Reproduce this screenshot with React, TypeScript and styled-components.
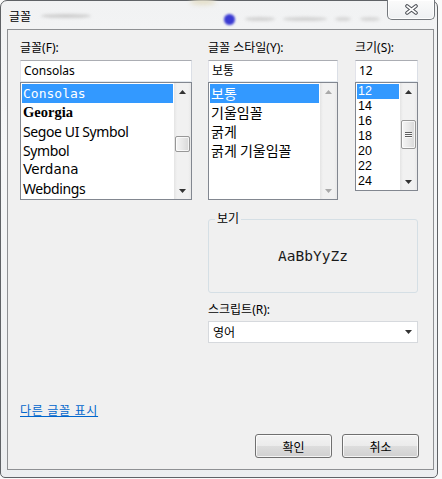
import React from 'react'
import styled, { createGlobalStyle } from 'styled-components'

const GlobalStyle = createGlobalStyle`
  html, body { margin: 0; padding: 0; }
  body {
    background: #fafafa;
    font-family: "Noto Sans", "Noto Sans CJK KR", sans-serif;
    font-size: 12px;
    color: #000;
  }
`

const Desktop = styled.div`
  width: 442px;
  height: 479px;
  overflow: hidden;
  background: #fafafa;
`

const Window = styled.div`
  position: relative;
  width: 438px;
  height: 478px;
  box-sizing: border-box;
  border: 1px solid #5f6266;
  border-radius: 7px 7px 5px 5px;
  background: linear-gradient(to bottom, #f1f2f3 0%, #f6f7f8 30%, #eceef0 100%);
  padding: 0 3px 7px 6px;
  display: flex;
  flex-direction: column;
`

const TitleBar = styled.div`
  position: relative;
  height: 28px;
  flex: none;
  display: flex;
  align-items: center;
  padding-left: 2px;
  font-family: "Noto Sans CJK KR", sans-serif;
  font-size: 12px;
`

const Haze = styled.span<{ $x: number; $y: number; $w: number; $h: number; $c: string; $b: number }>`
  position: absolute;
  left: ${p => p.$x}px;
  top: ${p => p.$y}px;
  width: ${p => p.$w}px;
  height: ${p => p.$h}px;
  background: ${p => p.$c};
  filter: blur(${p => p.$b}px);
  border-radius: 50%;
`

const CloseButton = styled.div`
  position: absolute;
  top: -1px;
  right: 2px;
  width: 48px;
  height: 20px;
  box-sizing: border-box;
  border: 1px solid #74787d;
  border-top: none;
  border-radius: 0 0 5px 5px;
  background: linear-gradient(to bottom, #fbfbfb, #eef0f2);
  box-shadow: inset 0 0 0 1px rgba(255, 255, 255, 0.85);
  display: flex;
  align-items: center;
  justify-content: center;
`

const Client = styled.div`
  height: 441px;
  box-sizing: border-box;
  border: 1px solid #8e9093;
  background: #f0f0f0;
  padding: 10px 14px 11px 12px;
  display: flex;
  flex-direction: column;
`

const FieldRow = styled.div`
  display: flex;
  align-items: flex-start;
`

const Column = styled.div<{ $w: number; $gap?: number }>`
  width: ${p => p.$w}px;
  margin-left: ${p => p.$gap ?? 0}px;
  display: flex;
  flex-direction: column;
`

const Label = styled.div`
  height: 16px;
  line-height: 16px;
  margin-bottom: 4px;
  font-size: 12px;
  white-space: nowrap;
`

const TextBox = styled.div`
  height: 22px;
  box-sizing: border-box;
  border: 1px solid;
  border-color: #abadb3 #dbdfe6 #e3e9ef #e2e3ea;
  background: #fff;
  padding: 0 3px;
  line-height: 20px;
  font-size: 12px;
  white-space: nowrap;
`

const ListBox = styled.div<{ $h: number }>`
  height: ${p => p.$h}px;
  box-sizing: border-box;
  border: 1px solid #828790;
  background: #fff;
  display: flex;
`

const Items = styled.div`
  flex: 1;
  padding: 1px;
  overflow: hidden;
  min-width: 0;
`

const Item = styled.div<{ $h: number; $selected?: boolean }>`
  height: ${p => p.$h}px;
  line-height: ${p => p.$h}px;
  padding-left: 1px;
  white-space: nowrap;
  background: ${p => (p.$selected ? '#3399ff' : 'transparent')};
  color: ${p => (p.$selected ? '#fff' : '#000')};
`

const ScrollBar = styled.div`
  width: 17px;
  flex: none;
  display: flex;
  flex-direction: column;
  background: linear-gradient(to right, #e4e4e4, #f1f1f1 3px, #f1f1f1 14px, #e8e8e8);
`

const ScrollButton = styled.div`
  height: 17px;
  flex: none;
  display: flex;
  align-items: center;
  justify-content: center;
`

const Track = styled.div`
  flex: 1;
  display: flex;
  flex-direction: column;
  align-items: center;
`

const Thumb = styled.div<{ $top: number; $height: number }>`
  margin-top: ${p => p.$top}px;
  height: ${p => p.$height}px;
  width: 15px;
  box-sizing: border-box;
  border: 1px solid #979797;
  border-radius: 2px;
  background: linear-gradient(to right, #f5f5f5, #e8e8e8 50%, #d8d8d8);
  box-shadow: inset 0 0 0 1px rgba(255, 255, 255, 0.7);
  display: flex;
  flex-direction: column;
  align-items: center;
  justify-content: center;
  gap: 1px;
`

const Grip = styled.span`
  width: 7px;
  height: 1px;
  background: #5e5e5e;
  box-shadow: 0 1px 0 #f8f8f8;
`

const Side = styled.div`
  margin-left: 188px;
  width: 210px;
  display: flex;
  flex-direction: column;
`

const Group = styled.div`
  position: relative;
  margin-top: 19px;
  height: 74px;
  box-sizing: border-box;
  border: 1px solid #d5dfe5;
  border-radius: 3px;
  display: flex;
  align-items: center;
  justify-content: center;
`

const Legend = styled.span`
  position: absolute;
  top: -9px;
  left: 6px;
  padding: 0 2px;
  line-height: 16px;
  background: #f0f0f0;
  font-size: 12px;
`

const Sample = styled.div`
  font-family: "DejaVu Sans Mono", monospace;
  font-size: 14.5px;
  color: #1a1a1a;
`

const ScriptLabel = styled(Label)`
  margin-top: 9px;
  margin-bottom: 3px;
`

const Select = styled.div`
  height: 22px;
  box-sizing: border-box;
  border: 1px solid #d6d9dd;
  background: #fff;
  padding: 0 5px 0 4px;
  display: flex;
  align-items: center;
  justify-content: space-between;
  font-size: 12px;
`

const Footer = styled.div`
  margin-top: auto;
  display: flex;
  flex-direction: column;
`

const Link = styled.a`
  align-self: flex-start;
  line-height: 16px;
  margin-bottom: 15px;
  color: #0066cc;
  text-decoration: underline;
  font-size: 12px;
  letter-spacing: 0.7px;
  cursor: pointer;
`

const ButtonRow = styled.div`
  display: flex;
  justify-content: flex-end;
  gap: 10px;
`

const Button = styled.button`
  width: 77px;
  height: 24px;
  box-sizing: border-box;
  border: 1px solid #707070;
  border-radius: 3px;
  background: linear-gradient(to bottom, #f3f3f3 0%, #ebebeb 50%, #dddddd 51%, #d0d0d0 100%);
  box-shadow: inset 0 0 0 1px rgba(255, 255, 255, 0.75);
  font-family: "Noto Sans CJK KR", sans-serif;
  font-size: 12px;
  color: #000;
  padding: 0;
`

const Arrow = ({ dir, off }: { dir: 'up' | 'down'; off?: boolean }) => (
  <svg width="7" height="4" viewBox="0 0 7 4">
    <polygon points={dir === 'up' ? '3.5,0 7,4 0,4' : '0,0 7,0 3.5,4'} fill={off ? '#a9a9a9' : '#333'} />
  </svg>
)

const Scroller = ({ off, top = 0, height = 0, grip }: { off?: boolean; top?: number; height?: number; grip?: boolean }) => (
  <ScrollBar>
    <ScrollButton><Arrow dir="up" off={off} /></ScrollButton>
    <Track>
      {!off && (
        <Thumb $top={top} $height={height}>
          {grip && (<><Grip /><Grip /><Grip /></>)}
        </Thumb>
      )}
    </Track>
    <ScrollButton><Arrow dir="down" off={off} /></ScrollButton>
  </ScrollBar>
)

const fonts = [
  { name: 'Consolas', family: '"DejaVu Sans Mono", monospace', size: 13, weight: 400, ls: 0 },
  { name: 'Georgia', family: '"Liberation Serif", serif', size: 14.5, weight: 700, ls: 0 },
  { name: 'Segoe UI Symbol', family: '"Noto Sans", sans-serif', size: 14, weight: 400, ls: -0.4 },
  { name: 'Symbol', family: '"Noto Sans", sans-serif', size: 14, weight: 400, ls: -0.4 },
  { name: 'Verdana', family: '"DejaVu Sans", sans-serif', size: 13.5, weight: 400, ls: 0 },
  { name: 'Webdings', family: '"Noto Sans", sans-serif', size: 14, weight: 400, ls: -0.4 },
]

const styles = ['보통', '기울임꼴', '굵게', '굵게 기울임꼴']
const sizes = ['12', '14', '16', '18', '20', '22', '24']

const FontItem = styled(Item)<{ $family: string; $size: number; $weight: number; $ls: number }>`
  font-family: ${p => p.$family};
  font-size: ${p => p.$size}px;
  font-weight: ${p => p.$weight};
  letter-spacing: ${p => p.$ls}px;
`

const StyleItem = styled(Item)`
  font-family: "Noto Sans CJK KR", sans-serif;
  font-size: 14px;
`

const SizeItem = styled(Item)`
  font-family: "Liberation Sans", sans-serif;
  font-size: 12.5px;
  padding-left: 1px;
`

export default function App() {
  return (
    <Desktop>
      <GlobalStyle />
      <Window>
        <TitleBar>
          <Haze $x={34} $y={13} $w={50} $h={4} $c="#cdcdcd" $b={1.5} />
          <Haze $x={183} $y={-2} $w={26} $h={6} $c="#e4dfc9" $b={2} />
          <Haze $x={217} $y={13} $w={11} $h={11} $c="#3a3ad2" $b={0.8} />
          <Haze $x={238} $y={16} $w={30} $h={4} $c="#d2d2d2" $b={1.5} />
          <Haze $x={276} $y={16} $w={44} $h={4} $c="#d2d2d2" $b={1.5} />
          <Haze $x={328} $y={16} $w={16} $h={4} $c="#d6d6d6" $b={1.5} />
          <Haze $x={353} $y={16} $w={20} $h={4} $c="#d6d6d6" $b={1.5} />
          글꼴
        </TitleBar>
        <CloseButton>
          <svg width="13" height="11" viewBox="0 0 13 11">
            <path d="M2 2 L11 9 M11 2 L2 9" stroke="#4b4f55" strokeWidth="3.6" strokeLinecap="round" />
            <path d="M2 2 L11 9 M11 2 L2 9" stroke="#ffffff" strokeWidth="1.6" strokeLinecap="round" />
          </svg>
        </CloseButton>
        <Client>
          <FieldRow>
            <Column $w={172}>
              <Label>글꼴(F):</Label>
              <TextBox>Consolas</TextBox>
              <ListBox $h={118}>
                <Items>
                  {fonts.map((f, i) => (
                    <FontItem key={f.name} $h={19} $selected={i === 0} $family={f.family} $size={f.size} $weight={f.weight} $ls={f.ls}>
                      {f.name}
                    </FontItem>
                  ))}
                </Items>
                <Scroller top={36} height={16} />
              </ListBox>
            </Column>
            <Column $w={130} $gap={16}>
              <Label>글꼴 스타일(Y):</Label>
              <TextBox>보통</TextBox>
              <ListBox $h={118}>
                <Items>
                  {styles.map((s, i) => (
                    <StyleItem key={s} $h={19} $selected={i === 0}>{s}</StyleItem>
                  ))}
                </Items>
                <Scroller off />
              </ListBox>
            </Column>
            <Column $w={63} $gap={17}>
              <Label>크기(S):</Label>
              <TextBox>12</TextBox>
              <ListBox $h={109}>
                <Items>
                  {sizes.map((s, i) => (
                    <SizeItem key={s} $h={15} $selected={i === 0}>{s}</SizeItem>
                  ))}
                </Items>
                <Scroller top={20} height={29} grip />
              </ListBox>
            </Column>
          </FieldRow>
          <Side>
            <Group>
              <Legend>보기</Legend>
              <Sample>AaBbYyZz</Sample>
            </Group>
            <ScriptLabel>스크립트(R):</ScriptLabel>
            <Select>
              <span>영어</span>
              <Arrow dir="down" />
            </Select>
          </Side>
          <Footer>
            <Link>다른 글꼴 표시</Link>
            <ButtonRow>
              <Button>확인</Button>
              <Button>취소</Button>
            </ButtonRow>
          </Footer>
        </Client>
      </Window>
    </Desktop>
  )
}
